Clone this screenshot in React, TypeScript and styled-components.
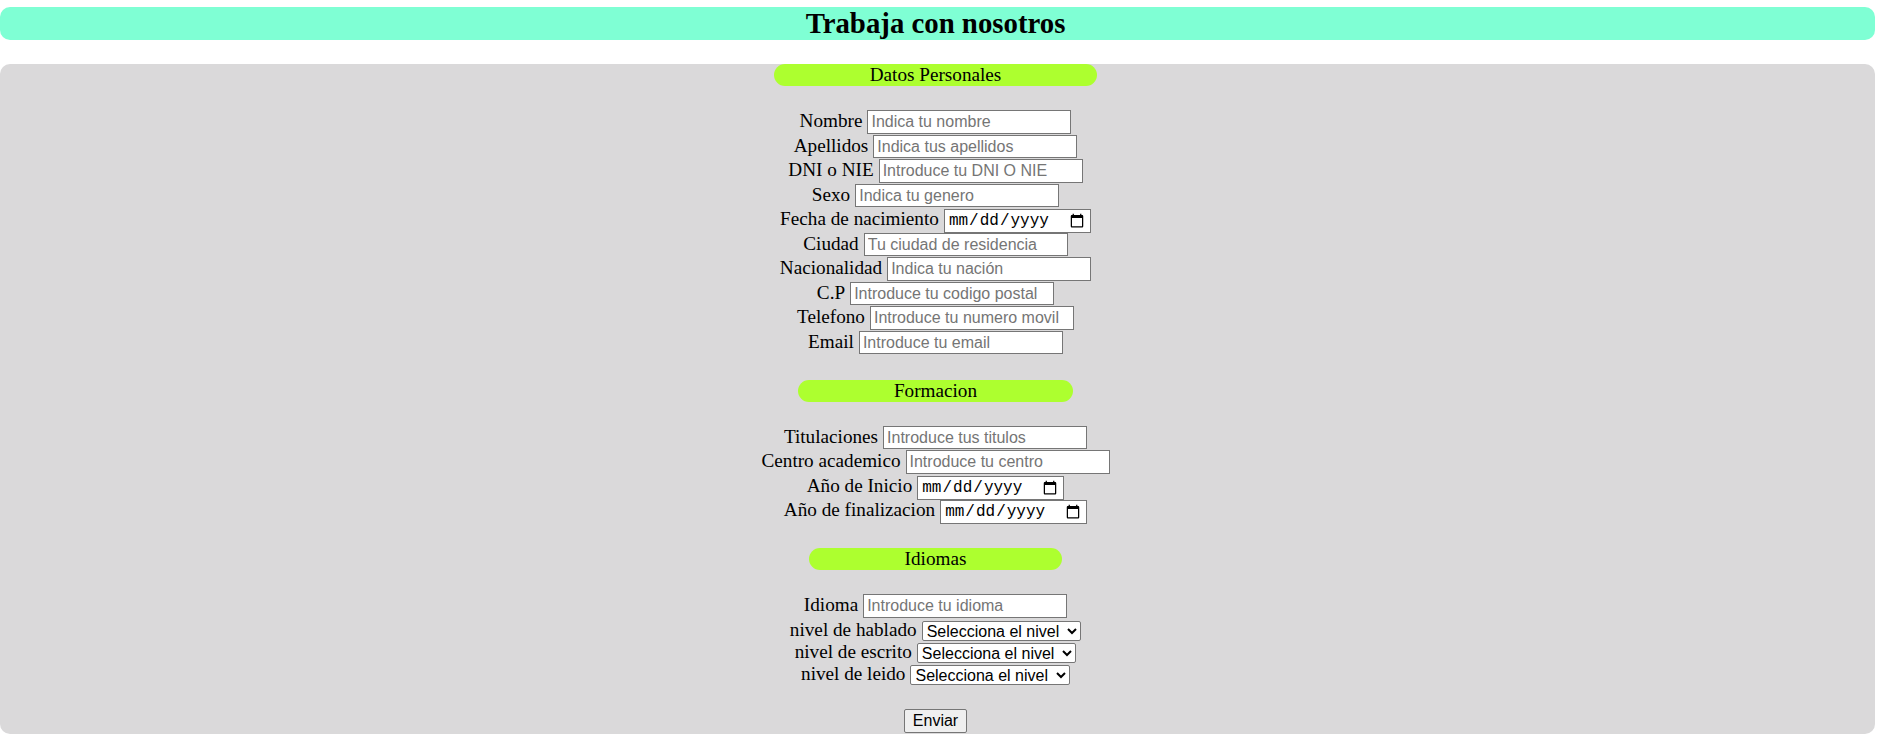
import styled, { createGlobalStyle } from 'styled-components';

const GlobalStyle = createGlobalStyle`
  body {
    margin: 0;
    background: #ffffff;
    font-family: "Liberation Serif", "Times New Roman", serif;
    color: #000000;
  }
`;

type Field = {
  label: string;
  type: 'text' | 'date' | 'select';
  placeholder?: string;
};

const personales: Field[] = [
  { label: 'Nombre', type: 'text', placeholder: 'Indica tu nombre' },
  { label: 'Apellidos', type: 'text', placeholder: 'Indica tus apellidos' },
  { label: 'DNI o NIE', type: 'text', placeholder: 'Introduce tu DNI O NIE' },
  { label: 'Sexo', type: 'text', placeholder: 'Indica tu genero' },
  { label: 'Fecha de nacimiento', type: 'date' },
  { label: 'Ciudad', type: 'text', placeholder: 'Tu ciudad de residencia' },
  { label: 'Nacionalidad', type: 'text', placeholder: 'Indica tu nación' },
  { label: 'C.P', type: 'text', placeholder: 'Introduce tu codigo postal' },
  { label: 'Telefono', type: 'text', placeholder: 'Introduce tu numero movil' },
  { label: 'Email', type: 'text', placeholder: 'Introduce tu email' },
];

const formacion: Field[] = [
  { label: 'Titulaciones', type: 'text', placeholder: 'Introduce tus titulos' },
  { label: 'Centro academico', type: 'text', placeholder: 'Introduce tu centro' },
  { label: 'Año de Inicio', type: 'date' },
  { label: 'Año de finalizacion', type: 'date' },
];

const idiomas: Field[] = [
  { label: 'Idioma', type: 'text', placeholder: 'Introduce tu idioma' },
  { label: 'nivel de hablado', type: 'select' },
  { label: 'nivel de escrito', type: 'select' },
  { label: 'nivel de leido', type: 'select' },
];

const niveles = ['Selecciona el nivel', 'Básico', 'Intermedio', 'Avanzado', 'Nativo'];

const Header = styled.header`
  margin-top: 7px;
  width: 1875px;
  height: 33px;
  box-sizing: border-box;
  padding-right: 4px;
  background: #7fffd4;
  border-radius: 10px;
  display: flex;
  align-items: center;
  justify-content: center;
`;

const Title = styled.h1`
  margin: 0;
  font-size: 28.8px;
  line-height: 33px;
  font-weight: bold;
`;

const Panel = styled.form`
  margin-top: 24px;
  width: 1875px;
  box-sizing: border-box;
  padding: 0 4px 1px 0;
  background: #dad9da;
  border-radius: 10px;
  display: flex;
  flex-direction: column;
  align-items: center;
`;

const Section = styled.section`
  display: flex;
  flex-direction: column;
  align-items: center;
  margin-bottom: 24.5px;

  &:last-of-type {
    margin-bottom: 0;
  }
`;

const SectionTitle = styled.h2`
  margin: 0 0 24px;
  padding: 0 96px;
  height: 22px;
  line-height: 22px;
  background: #adff2f;
  border-radius: 11px;
  font-size: 19.2px;
  font-weight: normal;
`;

const Row = styled.div<{ $compact?: boolean }>`
  display: flex;
  justify-content: center;
  align-items: ${(p) => (p.$compact ? 'flex-end' : 'baseline')};
  gap: 5px;
  height: ${(p) => (p.$compact ? '22px' : '24.5px')};
`;

const Label = styled.label`
  font-size: 19.2px;
  line-height: 22px;
  white-space: nowrap;
`;

const TextInput = styled.input`
  box-sizing: border-box;
  width: 204px;
  height: 23.5px;
  padding: 1px 3px;
  border: 1px solid #767676;
  background: #ffffff;
  font-family: "Liberation Sans", Arial, sans-serif;
  font-size: 16px;
  color: #000000;

  &::placeholder {
    color: #757575;
  }
`;

const DateInput = styled.input`
  box-sizing: border-box;
  width: 147px;
  height: 24px;
  padding: 1px 3px;
  border: 1px solid #767676;
  background: #ffffff;
  font-family: "Liberation Mono", "Courier New", monospace;
  font-size: 16px;
  color: #000000;
`;

const Select = styled.select`
  box-sizing: border-box;
  width: 159.5px;
  height: 20px;
  border: 1px solid #767676;
  border-radius: 2px;
  background: #ffffff;
  font-family: "Liberation Sans", Arial, sans-serif;
  font-size: 16px;
  color: #000000;
`;

const SubmitButton = styled.button`
  margin-top: 24.8px;
  box-sizing: border-box;
  width: 63px;
  height: 23.5px;
  padding: 0;
  border: 1px solid #767676;
  border-radius: 2px;
  background: #efefef;
  font-family: "Liberation Sans", Arial, sans-serif;
  font-size: 16px;
  color: #000000;
`;

function FieldRow({ field }: { field: Field }) {
  const id = field.label.replace(/\W+/g, '-').toLowerCase();
  return (
    <Row $compact={field.type === 'select'}>
      <Label htmlFor={id}>{field.label}</Label>
      {field.type === 'text' && (
        <TextInput id={id} type="text" placeholder={field.placeholder} />
      )}
      {field.type === 'date' && <DateInput id={id} type="date" />}
      {field.type === 'select' && (
        <Select id={id} defaultValue={niveles[0]}>
          {niveles.map((n) => (
            <option key={n}>{n}</option>
          ))}
        </Select>
      )}
    </Row>
  );
}

function FormSection({ title, fields }: { title: string; fields: Field[] }) {
  return (
    <Section>
      <SectionTitle>{title}</SectionTitle>
      {fields.map((f) => (
        <FieldRow key={f.label} field={f} />
      ))}
    </Section>
  );
}

export default function App() {
  return (
    <>
      <GlobalStyle />
      <Header>
        <Title>Trabaja con nosotros</Title>
      </Header>
      <Panel onSubmit={(e) => e.preventDefault()}>
        <FormSection title="Datos Personales" fields={personales} />
        <FormSection title="Formacion" fields={formacion} />
        <FormSection title="Idiomas" fields={idiomas} />
        <SubmitButton type="submit">Enviar</SubmitButton>
      </Panel>
    </>
  );
}
